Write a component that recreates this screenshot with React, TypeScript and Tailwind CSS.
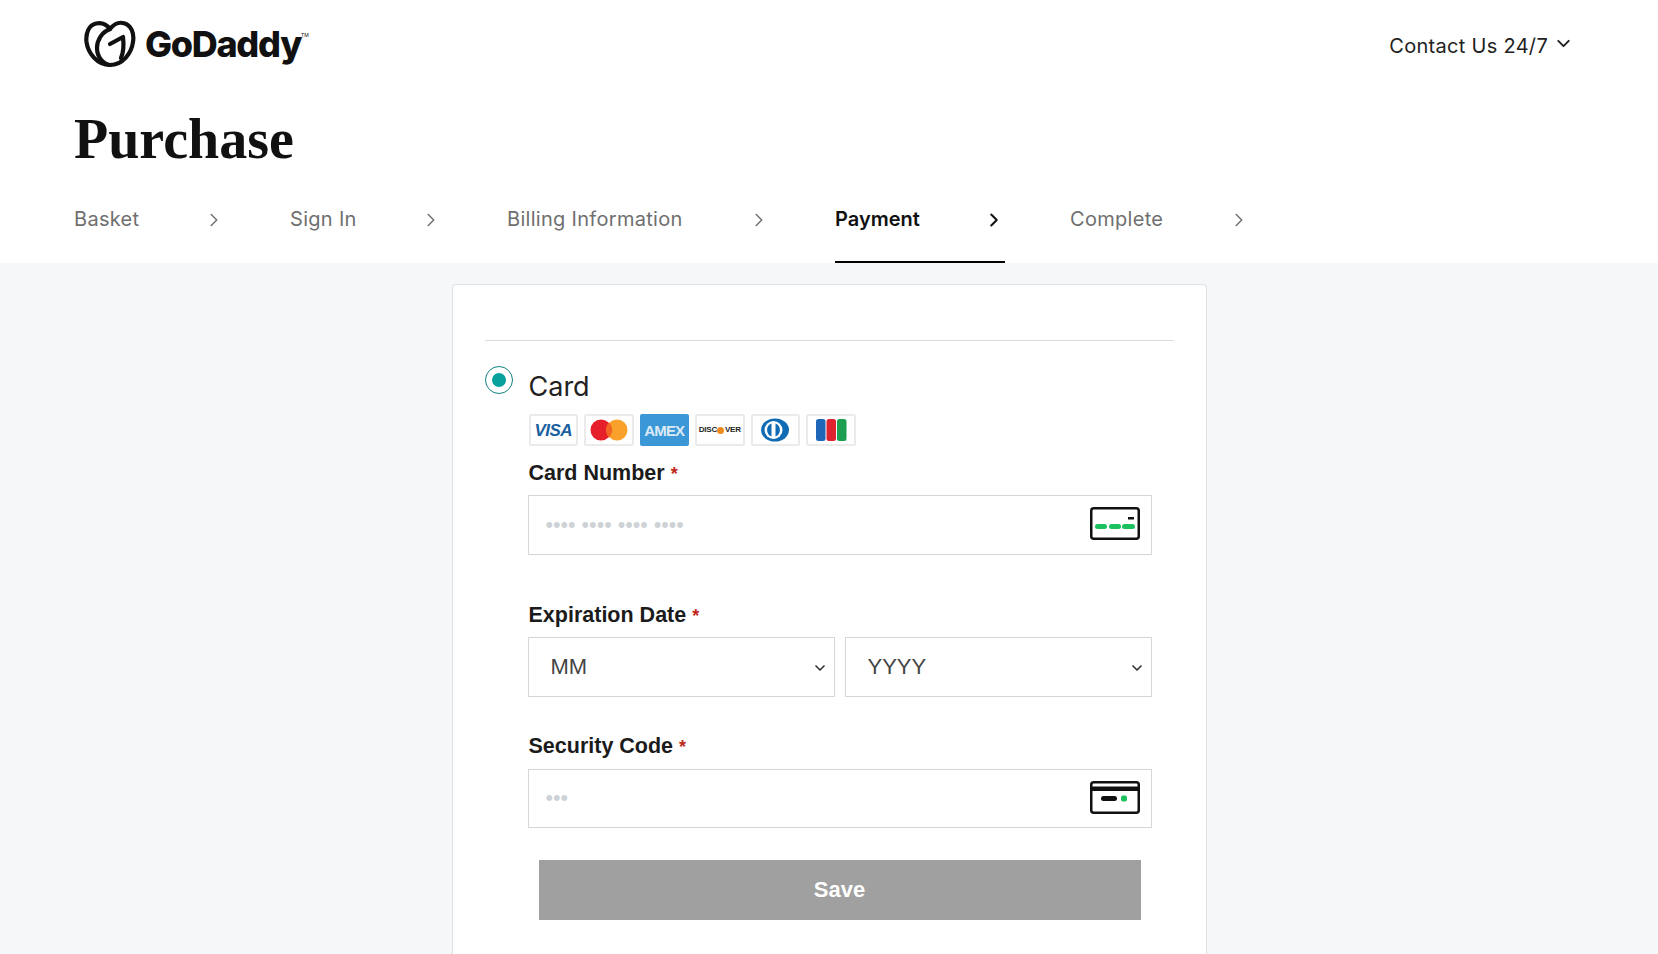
import { ChevronDown, ChevronRight } from "lucide-react"

const steps = [
  { label: "Basket", width: "w-[151px]" },
  { label: "Sign In", width: "w-[152px]" },
  { label: "Billing Information", width: "w-[263px]" },
  { label: "Payment", width: "w-[170px]", active: true },
  { label: "Complete", width: "w-[180px]" },
]

function Logo() {
  return (
    <div className="flex items-center">
      <svg width="54" height="48" viewBox="0 0 54 48" fill="none" stroke="#111" strokeWidth="4.2" strokeLinecap="round" strokeLinejoin="round">
        <path d="M27 45C14 45 5 33 3.500 22C2.500 13 6 5 13 3.500C19 2.200 24 5 27 9C31 4 36 1.800 41 3.200C48 5 51.500 13 50 22C48.500 33 40 45 27 45Z" />
        <path d="M27 9C19 12 14 20 14 28C14 37 20 44 27 45" />
        <path d="M27 24L40 17C41 25 41 31 38 38" />
      </svg>
      <span className="ml-[8px] font-['Inter',sans-serif] text-[36px] leading-none font-extrabold tracking-[-1.3px] text-[#111]">GoDaddy</span>
      <span className="mb-[18px] font-['Inter',sans-serif] text-[5px] leading-none text-[#111]">TM</span>
    </div>
  )
}

function PayBox({ children, fill }: { children: React.ReactNode; fill?: boolean }) {
  return (
    <div className={fill ? "flex h-[32px] w-[49.500px] items-center justify-center rounded-[2px] bg-[#3b97d6]" : "flex h-[32px] w-[49.500px] items-center justify-center rounded-[2px] border-2 border-[#ebebeb] bg-white"}>
      {children}
    </div>
  )
}

function PayIcons() {
  return (
    <div className="flex gap-[6px]">
      <PayBox>
        <span className="font-['Liberation_Sans',sans-serif] text-[17px] leading-none font-bold tracking-[-0.5px] text-[#1a5f9e] italic">VISA</span>
      </PayBox>
      <PayBox>
        <svg width="38" height="22" viewBox="0 0 38 22">
          <circle cx="11" cy="11" r="10.500" fill="#e5202a" />
          <circle cx="27" cy="11" r="10.500" fill="#f9a12a" />
          <path d="M19 3.500a10.500 10.500 0 0 1 0 15a10.500 10.500 0 0 1 0-15Z" fill="#f26522" />
        </svg>
      </PayBox>
      <PayBox fill>
        <span className="font-['Liberation_Sans',sans-serif] text-[15px] leading-none font-bold tracking-[-0.8px] text-[#dbeaf6]">AMEX</span>
      </PayBox>
      <PayBox>
        <span className="flex items-center font-['Liberation_Sans',sans-serif] text-[8px] leading-none font-bold tracking-[-0.2px] text-[#222]">
          DISC<span className="mx-[0.5px] h-[7px] w-[7px] rounded-full bg-[#f08a1d]" />VER
        </span>
      </PayBox>
      <PayBox>
        <svg width="30" height="24" viewBox="0 0 30 24">
          <ellipse cx="15" cy="12" rx="14" ry="11.500" fill="#0f6cb4" />
          <circle cx="13.500" cy="12" r="9" fill="white" />
          <path d="M11.500 5.500a7 7 0 0 0 0 13ZM15.500 5.500a7 7 0 0 1 0 13Z" fill="#0f6cb4" />
        </svg>
      </PayBox>
      <PayBox>
        <svg width="32" height="24" viewBox="0 0 32 24">
          <rect x="1" y="1" width="9.500" height="22" rx="2.500" fill="#1d66b8" />
          <rect x="11.500" y="1" width="9.500" height="22" rx="2.500" fill="#e0242f" />
          <rect x="22" y="1" width="9.500" height="22" rx="2.500" fill="#1e9e50" />
        </svg>
      </PayBox>
    </div>
  )
}

function FieldLabel({ children }: { children: string }) {
  return (
    <div className="ml-px font-['Liberation_Sans',sans-serif] text-[21.500px] leading-[26px] font-bold text-[#1b1b1b]">
      {children} <span className="text-[18px] text-[#c0281c]">*</span>
    </div>
  )
}

function CardNumberIcon() {
  return (
    <svg width="50" height="33" viewBox="0 0 50 33" fill="none">
      <rect x="1.250" y="1.250" width="47.500" height="30.500" rx="2.500" stroke="#111" strokeWidth="2.500" />
      <rect x="38" y="10" width="6" height="2.500" fill="#111" />
      <rect x="5" y="17" width="12" height="5" rx="2.500" fill="#1cc15f" />
      <rect x="19" y="17" width="12" height="5" rx="2.500" fill="#1cc15f" />
      <rect x="32" y="17" width="13" height="5" rx="2.500" fill="#1cc15f" />
    </svg>
  )
}

function SecurityIcon() {
  return (
    <svg width="50" height="33" viewBox="0 0 50 33" fill="none">
      <rect x="1.250" y="1.250" width="47.500" height="30.500" rx="2.500" stroke="#111" strokeWidth="2.500" />
      <rect x="1" y="5.500" width="48" height="4.500" fill="#111" />
      <rect x="11" y="15" width="16" height="5" rx="2.500" fill="#111" />
      <rect x="31" y="14.500" width="6" height="6" rx="2" fill="#1cc15f" />
    </svg>
  )
}

function TextField({ placeholder, icon, height }: { placeholder: string; icon: React.ReactNode; height: string }) {
  return (
    <div className="relative">
      <input
        placeholder={placeholder}
        className={`${height} block w-full border border-[#d4d7d9] bg-white pl-[17px] font-['Liberation_Sans',sans-serif] text-[21.500px] outline-none placeholder:text-[#cdd2d6]`}
      />
      <div className="absolute top-[12px] right-[12px]">{icon}</div>
    </div>
  )
}

function DateSelect({ placeholder }: { placeholder: string }) {
  return (
    <div className="relative">
      <select className="h-[60px] w-full appearance-none border border-[#d4d7d9] bg-white pb-[2px] pl-[22px] font-['Liberation_Sans',sans-serif] text-[22px] text-[#444] outline-none">
        <option>{placeholder}</option>
      </select>
      <ChevronDown className="absolute top-[23px] right-[7px] h-[16px] w-[16px] text-[#333]" strokeWidth={2.500} />
    </div>
  )
}

export default function App() {
  return (
    <div className="flex h-screen flex-col overflow-hidden bg-[#f5f7f8]">
      <div className="bg-white pl-[74px]">
        <div className="flex items-start justify-between pt-[20px] pr-[84px] pl-[9px]">
          <Logo />
          <div className="mt-[11px] flex items-center gap-[5px] font-['Inter',sans-serif] text-[20px] leading-[30px] tracking-[0.3px] text-[#222]">
            Contact Us 24/7
            <ChevronDown className="mb-[5px] h-[21px] w-[21px]" strokeWidth={2.200} />
          </div>
        </div>

        <h1 className="mt-[38px] font-['Liberation_Serif',serif] text-[56px] leading-[66px] font-bold text-[#111]">Purchase</h1>

        <div className="mt-[20px] flex gap-[65px]">
          {steps.map((step) => (
            <div
              key={step.label}
              className={
                step.active
                  ? `${step.width} flex h-[71px] items-start justify-between border-b-2 border-black pt-[12px] font-['Inter',sans-serif] text-[20px] leading-[30px] font-semibold text-[#111]`
                  : `${step.width} flex h-[71px] items-start justify-between pt-[12px] font-['Inter',sans-serif] text-[20px] leading-[30px] tracking-[0.3px] text-[#6f6f6f]`
              }
            >
              {step.label}
              <ChevronRight className="mt-[5px] h-[22px] w-[22px]" strokeWidth={step.active ? 2.200 : 1.600} />
            </div>
          ))}
        </div>
      </div>

      <div className="mx-auto mt-[21px] w-[755px] flex-1 rounded-t-[4px] border border-b-0 border-[#dfe2e4] bg-white px-[32px] pt-[55px]">
        <hr className="border-[#d9dcde]" />

        <div className="mt-[25px] flex">
          <div className="flex h-[28px] w-[28px] items-center justify-center rounded-full border border-[#0f7f7f]">
            <div className="h-[14px] w-[14px] rounded-full bg-[#07a09a]" />
          </div>
          <div className="ml-[15px] w-[624px]">
            <div className="mt-[4px] ml-px font-['Inter',sans-serif] text-[27px] leading-[34px] text-[#222]">Card</div>
            <div className="mt-[10px] ml-px">
              <PayIcons />
            </div>

            <div className="mt-[14px]">
              <FieldLabel>Card Number</FieldLabel>
            </div>
            <div className="mt-[8px]">
              <TextField height="h-[60px]" placeholder="•••• •••• •••• ••••" icon={<CardNumberIcon />} />
            </div>

            <div className="mt-[47px]">
              <FieldLabel>Expiration Date</FieldLabel>
            </div>
            <div className="mt-[8px] grid grid-cols-2 gap-[10px]">
              <DateSelect placeholder="MM" />
              <DateSelect placeholder="YYYY" />
            </div>

            <div className="mt-[36px]">
              <FieldLabel>Security Code</FieldLabel>
            </div>
            <div className="mt-[9px]">
              <TextField height="h-[59px]" placeholder="•••" icon={<SecurityIcon />} />
            </div>

            <div className="mt-[32px] px-[11px]">
              <button className="h-[60px] w-full bg-[#a0a0a0] pb-[2px] font-['Liberation_Sans',sans-serif] text-[22px] font-bold text-white">Save</button>
            </div>
          </div>
        </div>
      </div>
    </div>
  )
}
